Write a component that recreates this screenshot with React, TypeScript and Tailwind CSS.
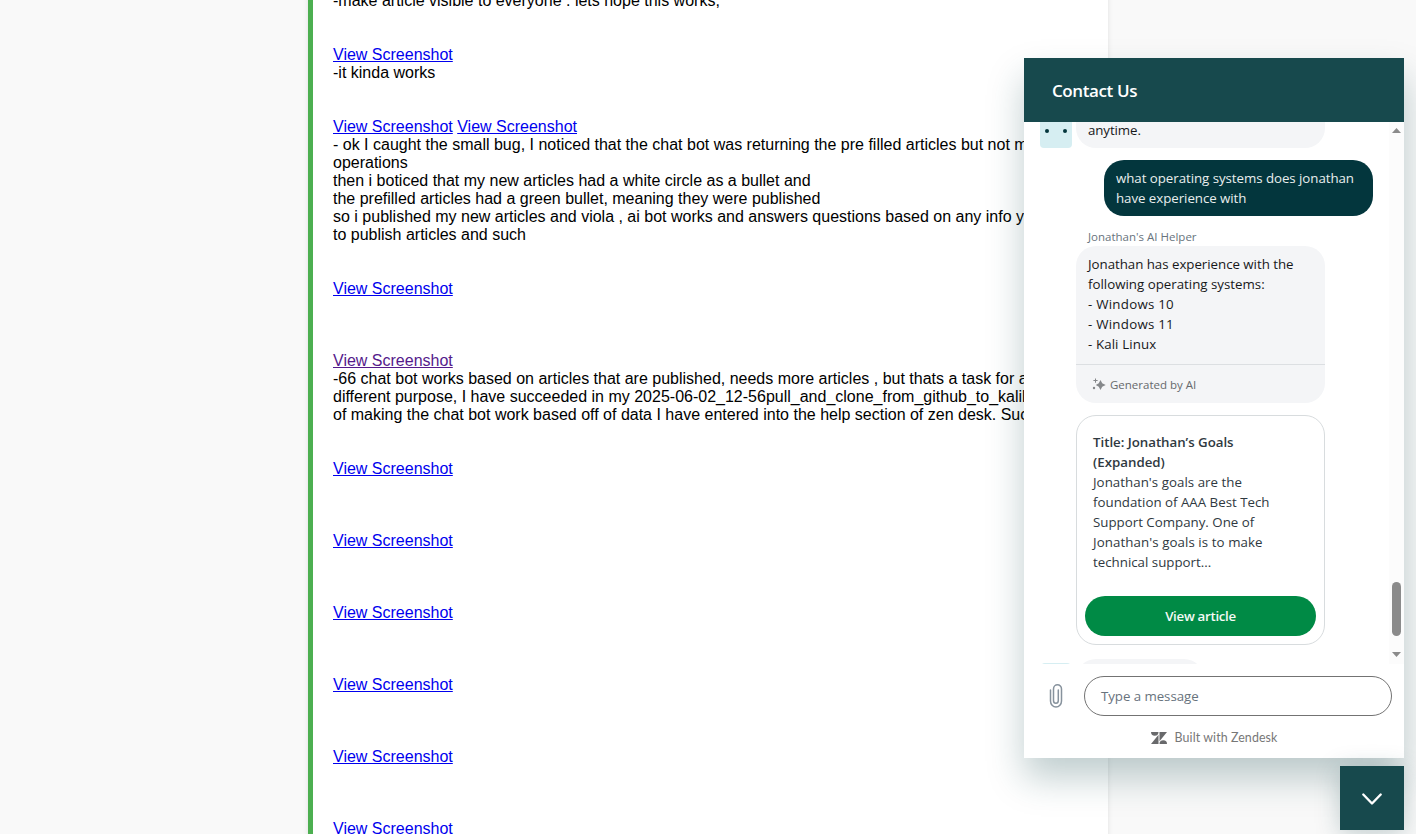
import type { ReactNode } from "react";

type Entry = { text?: string; links?: number; visited?: boolean };

const entries: Entry[] = [
  { text: "-make article visible to everyone . lets hope this works," },
  {},
  {},
  { links: 1 },
  { text: "-it kinda works" },
  {},
  {},
  { links: 2 },
  { text: "- ok I caught the small bug, I noticed that the chat bot was returning the pre filled articles but not my new" },
  { text: "operations" },
  { text: "then i boticed that my new articles had a white circle as a bullet and" },
  { text: "the prefilled articles had a green bullet, meaning they were published" },
  { text: "so i published my new articles and viola , ai bot works and answers questions based on any info you need" },
  { text: "to publish articles and such" },
  {},
  {},
  { links: 1 },
  {},
  {},
  {},
  { links: 1, visited: true },
  { text: "-66 chat bot works based on articles that are published, needs more articles , but thats a task for a" },
  { text: "different purpose, I have succeeded in my 2025-06-02_12-56pull_and_clone_from_github_to_kalilinux" },
  { text: "of making the chat bot work based off of data I have entered into the help section of zen desk. Success" },
  {},
  {},
  { links: 1 },
  {},
  {},
  {},
  { links: 1 },
  {},
  {},
  {},
  { links: 1 },
  {},
  {},
  {},
  { links: 1 },
  {},
  {},
  {},
  { links: 1 },
  {},
  {},
  {},
  { links: 1 },
];

function Notes() {
  return (
    <article className="-mt-2 ml-[308px] h-[860px] w-[800px] shrink-0 border-l-[5px] border-[#4caf50] bg-white pl-5 font-['Liberation_Sans',Arial,sans-serif] text-base leading-[18px] text-black shadow-[0_0_5px_rgba(0,0,0,0.1)]">
      {entries.map((e, i) => (
        <div key={i} className="flex h-[18px] gap-[4.45px] overflow-visible whitespace-nowrap">
          {e.text}
          {Array.from({ length: e.links ?? 0 }, (_, k) => (
            <a key={k} className={e.visited ? "text-[#551a8b] underline" : "text-[#0000ee] underline"}>
              View Screenshot
            </a>
          ))}
        </div>
      ))}
    </article>
  );
}

function Line({ children, className = "" }: { children: ReactNode; className?: string }) {
  return <div className={`whitespace-nowrap ${className}`}>{children}</div>;
}

function Messages() {
  return (
    <div className="flex h-[542px] overflow-hidden bg-white">
      <div className="flex w-[365px] flex-col pl-4 text-[13.3px] leading-5 text-[#17181a]">
        <div className="flex h-[26px] shrink-0 items-end gap-1">
          <div className="flex h-10 w-8 shrink-0 items-end justify-between rounded-[4px] bg-[#d6eef2] px-[5px] pb-[15px]">
            <span className="size-1 rounded-full bg-[#03363d]" />
            <span className="size-1 rounded-full bg-[#03363d]" />
          </div>
          <div className="flex h-[60px] w-[249px] items-end rounded-[20px] bg-[#f4f5f7] px-3 pb-2">
            <Line className="tracking-[-0.1px]">anytime.</Line>
          </div>
        </div>
        <div className="mt-3 ml-16 h-14 w-[269px] shrink-0 rounded-[20px] bg-[#03363d] px-3 py-2 tracking-[-0.05px] text-[#e9eeee]">
          <Line>what operating systems does jonathan</Line>
          <Line>have experience with</Line>
        </div>
        <div className="mt-[13px] ml-12 h-[17px] shrink-0 text-[11.5px] leading-4 text-[#68737d]">
          <Line>Jonathan's AI Helper</Line>
        </div>
        <div className="ml-9 flex h-[157px] w-[249px] shrink-0 flex-col rounded-[20px] bg-[#f4f5f7]">
          <div className="h-[119px] border-b border-[#dcdfe2] px-3 pt-2">
            <Line className="tracking-[-0.03px]">Jonathan has experience with the</Line>
            <Line>following operating systems:</Line>
            <Line className="tracking-[0.25px]">- Windows 10</Line>
            <Line className="tracking-[0.25px]">- Windows 11</Line>
            <Line className="tracking-[0.1px]">- Kali Linux</Line>
          </div>
          <div className="flex h-[38px] items-center gap-1 pt-0.5 pl-4 text-[11.5px] text-[#66696c]">
            <svg width="14" height="14" viewBox="0 0 14 14" fill="#85888b">
              <path d="M8.500 2 10.200 5.300l3.500 1.700-3.500 1.700L8.500 12 6.800 8.700 3.800 7l3-1.700Z" />
              <path d="M3 .5h1v1.600h1.600v1H4v1.600H3V3.100H1.400v-1H3Z" />
              <circle cx="2" cy="10" r="1.200" />
            </svg>
            <Line>Generated by AI</Line>
          </div>
        </div>
        <div className="mt-3 ml-9 flex h-[230px] w-[249px] shrink-0 flex-col rounded-[20px] border border-[#d8dcde] px-2 pt-4 pb-2 text-[#2f3941]">
          <div className="px-2">
            <Line className="font-semibold tracking-[-0.03px]">Title: Jonathan’s Goals</Line>
            <Line className="font-semibold">(Expanded)</Line>
            <Line className="tracking-[0.04px]">Jonathan's goals are the</Line>
            <Line>foundation of AAA Best Tech</Line>
            <Line>Support Company. One of</Line>
            <Line className="tracking-[0.08px]">Jonathan's goals is to make</Line>
            <Line>technical support...</Line>
          </div>
          <button className="mt-auto h-10 w-full rounded-full bg-[#008a45] font-semibold tracking-[-0.3px] text-[#f4faf6]">View article</button>
        </div>
        <div className="mt-3.5 flex h-5 shrink-0 gap-1">
          <div className="mt-1 h-8 w-8 rounded-[5px] bg-[#d6eef2]" />
          <div className="h-10 w-[128px] rounded-[20px] bg-[#f4f5f7]" />
        </div>
      </div>
      <div className="flex w-[15px] flex-col items-center bg-[#fcfcfc] pt-1.5 pb-[7px]">
        <svg width="9" height="5" viewBox="0 0 9 5" fill="#8b8b8b">
          <path d="M4.500 0 9 5H0Z" />
        </svg>
        <div className="mt-[449px] h-[54px] w-[9px] rounded-full bg-[#8b8b8b]" />
        <svg className="mt-auto" width="9" height="5" viewBox="0 0 9 5" fill="#8b8b8b">
          <path d="M0 0h9L4.500 5Z" />
        </svg>
      </div>
    </div>
  );
}

function ChatWidget() {
  return (
    <section className="flex h-[700px] w-[380px] flex-col bg-white font-['Open_Sans',sans-serif] shadow-[0_20px_34px_rgba(23,73,77,0.27)]">
      <header className="flex h-16 shrink-0 items-center bg-[#17494d] px-7 pt-0.5 text-[17px] font-semibold tracking-[-0.4px] text-white">
        <Line>Contact Us</Line>
      </header>
      <Messages />
      <div className="flex h-16 items-center pr-3 pl-6">
        <svg width="16" height="24" viewBox="0 0 16 24" fill="none" stroke="#87929d" strokeWidth="1.500" strokeLinecap="round">
          <path d="M2.500 6v11a5.500 6 0 0 0 11 0V5a4 4.200 0 0 0-8 0v11.500a2.400 2.800 0 0 0 4.800 0V6" />
        </svg>
        <div className="ml-5 flex h-10 flex-1 items-center rounded-full border border-[#737373] px-4 pt-0.5 text-[13.3px] tracking-[-0.06px] text-[#68737d]">
          <Line>Type a message</Line>
        </div>
      </div>
      <footer className="flex h-5 items-center justify-center gap-2 font-[Lato,sans-serif] text-[12.4px] tracking-[0.1px] text-[#777]">
        <svg width="16" height="12" viewBox="0 0 16 12" fill="#68696b">
          <path d="M0 0h7.500a3.750 3.700 0 0 1-7.500 0ZM7.500 2.800V12H0ZM8.500 0H16L8.500 9.200ZM8.500 12a3.750 3.700 0 0 1 7.500 0Z" />
        </svg>
        <Line>Built with Zendesk</Line>
      </footer>
    </section>
  );
}

export default function App() {
  return (
    <main className="relative flex h-[834px] w-[1416px] flex-col overflow-hidden bg-[#f9f9f9]">
      <Notes />
      <div className="absolute top-[58px] right-3 flex flex-col items-end gap-2">
        <ChatWidget />
        <button className="flex size-16 items-center justify-center bg-[#17494d] pt-px shadow-[0_4px_24px_rgba(23,73,77,0.25)]">
          <svg width="22" height="14" viewBox="0 0 22 14" fill="none" stroke="#fff" strokeWidth="2.400" strokeLinecap="round" strokeLinejoin="round">
            <path d="m2.300 2.500 8.700 9 8.700-9" />
          </svg>
        </button>
      </div>
    </main>
  );
}
